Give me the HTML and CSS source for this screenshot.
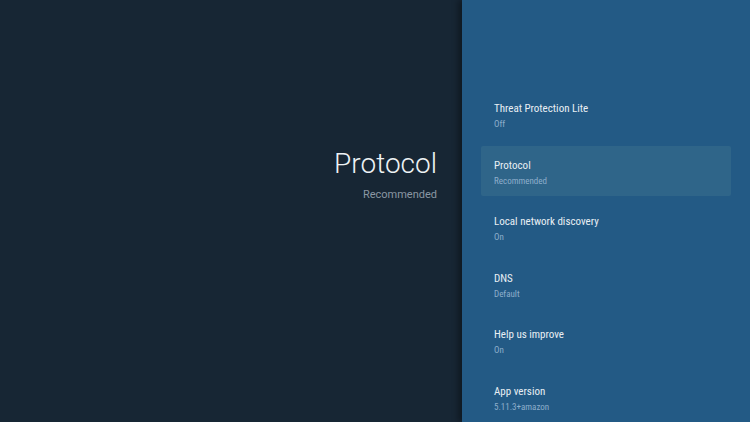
FILE: index.html
```html
<!DOCTYPE html>
<html lang="en">
<head>
    <meta charset="UTF-8">
    <meta name="viewport" content="width=device-width, initial-scale=1.0">
    <title>Settings - Protocol</title>
    <link rel="stylesheet" href="styles.css">
</head>
<body>
    <div class="screen">
        <div class="header-side">
            <div class="header-title">Protocol</div>
            <div class="header-sub">Recommended</div>
        </div>
        <div class="panel">
            <div class="item">
                <div class="item-title">Threat Protection Lite</div>
                <div class="item-sub">Off</div>
            </div>
            <div class="item selected">
                <div class="item-title">Protocol</div>
                <div class="item-sub">Recommended</div>
            </div>
            <div class="item">
                <div class="item-title">Local network discovery</div>
                <div class="item-sub">On</div>
            </div>
            <div class="item">
                <div class="item-title">DNS</div>
                <div class="item-sub">Default</div>
            </div>
            <div class="item">
                <div class="item-title">Help us improve</div>
                <div class="item-sub">On</div>
            </div>
            <div class="item">
                <div class="item-title">App version</div>
                <div class="item-sub">5.11.3+amazon</div>
            </div>
        </div>
    </div>
</body>
</html>
```

FILE: styles.css
```css
body {
    margin: 0;
    padding: 0;
    background-color: #172634;
    font-family: Roboto, "Noto Sans", sans-serif;
    overflow: hidden;
}
.screen {
    display: flex;
    width: 750px;
    height: 422px;
}
.header-side {
    flex: 1;
    text-align: right;
    padding-top: 147px;
    padding-right: 25px;
    background-color: #172634;
}
.header-title {
    font-size: 28px;
    font-weight: 300;
    color: #eef2f5;
    line-height: 34px;
}
.header-sub {
    font-size: 11px;
    color: #8a97a3;
    margin-top: 7px;
}
.panel {
    width: 250px;
    padding: 89px 19px 0 19px;
    background-color: #235a85;
    box-shadow: -4px 0 6px rgba(0, 0, 0, 0.35);
    display: flex;
    flex-direction: column;
    gap: 6.6px;
}
.item {
    height: 50px;
    flex-shrink: 0;
    box-sizing: border-box;
    padding: 13px 13px 0 13px;
    border-radius: 2px;
}
.item.selected {
    background-color: #2f6589;
}
.item-title {
    font-family: "Roboto Condensed", "Liberation Sans Narrow", "DejaVu Sans Condensed", Roboto, sans-serif;
    font-size: 11px;
    font-weight: 400;
    color: #e9eff4;
    line-height: 14px;
}
.item-sub {
    font-family: "Roboto Condensed", "Liberation Sans Narrow", "DejaVu Sans Condensed", Roboto, sans-serif;
    font-size: 9px;
    color: #8eaecb;
    margin-top: 2px;
    line-height: 12px;
}
```
